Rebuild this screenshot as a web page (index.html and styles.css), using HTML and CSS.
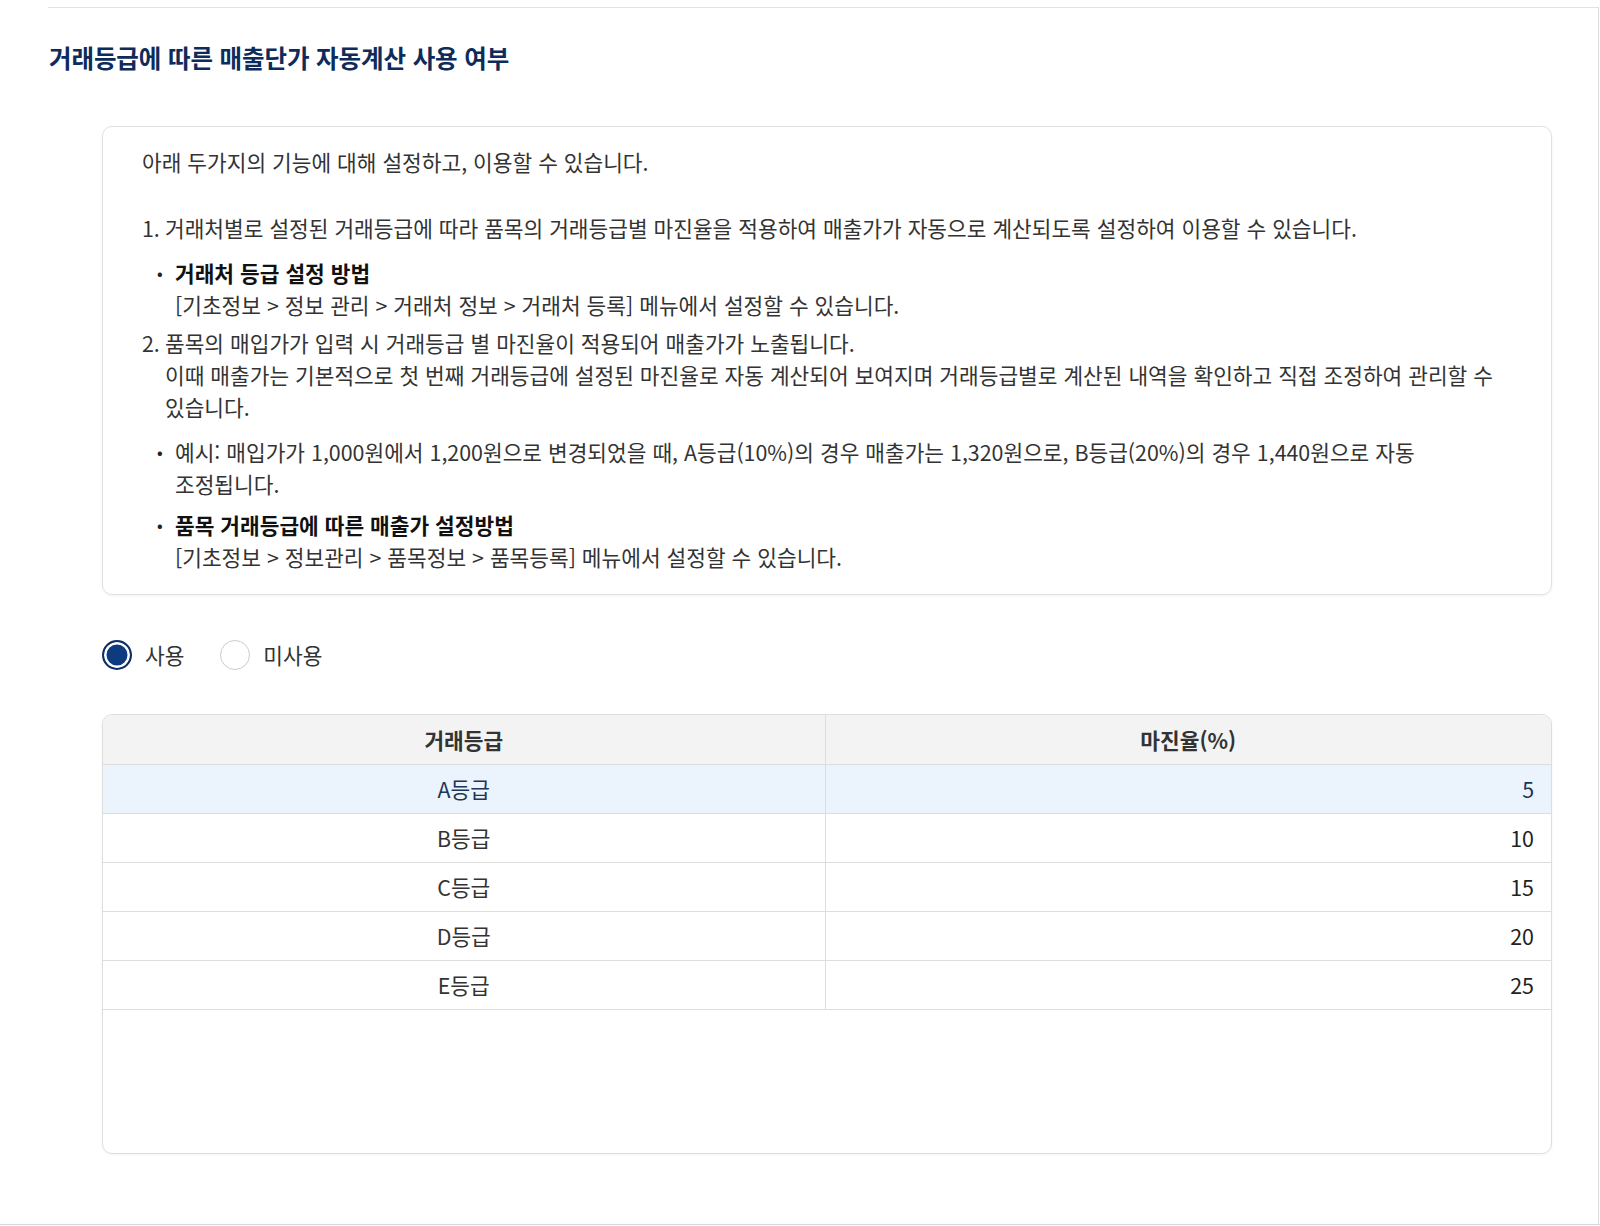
FILE: index.html
```html
<!DOCTYPE html>
<html lang="ko">
<head>
<meta charset="utf-8">
<title>거래등급에 따른 매출단가 자동계산 사용 여부</title>
<link rel="stylesheet" href="styles.css">
</head>
<body>
<div class="page">
<div class="frame">
  <h2 class="title">거래등급에 따른 매출단가 자동계산 사용 여부</h2>

  <div class="card">
    <p class="intro">아래 두가지의 기능에 대해 설정하고, 이용할 수 있습니다.</p>

    <div class="num-item">
      <span class="num">1.</span>
      <span class="num-text">거래처별로 설정된 거래등급에 따라 품목의 거래등급별 마진율을 적용하여 매출가가 자동으로 계산되도록 설정하여 이용할 수 있습니다.</span>
    </div>
    <div class="bullet b1">
      <span class="dot">•</span>
      <div class="bullet-text"><strong>거래처 등급 설정 방법</strong><br>[기초정보 &gt; 정보 관리 &gt; 거래처 정보 &gt; 거래처 등록] 메뉴에서 설정할 수 있습니다.</div>
    </div>

    <div class="num-item n2">
      <span class="num">2.</span>
      <span class="num-text">품목의 매입가가 입력 시 거래등급 별 마진율이 적용되어 매출가가 노출됩니다.<br>이때 매출가는 기본적으로 첫 번째 거래등급에 설정된 마진율로 자동 계산되어 보여지며 거래등급별로 계산된 내역을 확인하고 직접 조정하여 관리할 수 있습니다.</span>
    </div>
    <div class="bullet b2">
      <span class="dot">•</span>
      <div class="bullet-text">예시: 매입가가 1,000원에서 1,200원으로 변경되었을 때, A등급(10%)의 경우 매출가는 1,320원으로, B등급(20%)의 경우 1,440원으로 자동 조정됩니다.</div>
    </div>
    <div class="bullet b3">
      <span class="dot">•</span>
      <div class="bullet-text"><strong>품목 거래등급에 따른 매출가 설정방법</strong><br>[기초정보 &gt; 정보관리 &gt; 품목정보 &gt; 품목등록] 메뉴에서 설정할 수 있습니다.</div>
    </div>
  </div>

  <div class="radios">
    <label class="radio checked"><span class="circle"></span><span class="rlabel">사용</span></label>
    <label class="radio"><span class="circle"></span><span class="rlabel">미사용</span></label>
  </div>

  <div class="grid-wrap">
    <table class="grid">
      <colgroup><col class="c1"><col class="c2"></colgroup>
      <thead>
        <tr><th>거래등급</th><th>마진율(%)</th></tr>
      </thead>
      <tbody>
        <tr class="sel"><td class="grade">A등급</td><td class="rate">5</td></tr>
        <tr><td class="grade">B등급</td><td class="rate">10</td></tr>
        <tr><td class="grade">C등급</td><td class="rate">15</td></tr>
        <tr><td class="grade">D등급</td><td class="rate">20</td></tr>
        <tr><td class="grade">E등급</td><td class="rate">25</td></tr>
      </tbody>
    </table>
  </div>
</div>
</div>
</body>
</html>
```

FILE: styles.css
```css
* { box-sizing: border-box; }
html, body {
  margin: 0;
  padding: 0;
  background: #ffffff;
}
body {
  font-family: "Noto Sans CJK KR", "Noto Sans", "Liberation Sans", sans-serif;
  color: #333333;
  width: 1600px;
  height: 1226px;
  overflow: hidden;
}
.page {
  width: 1600px;
  height: 1225px;
  border-bottom: 1px solid #d8d8d8;
  padding-top: 7px;
}
.frame {
  margin-left: 48px;
  width: 1551px;
  height: 1218px;
  border-top: 1px solid #e2e2e2;
  border-right: 1px solid #dcdcdc;
  padding: 34px 46px 0 54px;
}
.title {
  margin: 0 0 0 -53px;
  font-size: 24.5px;
  line-height: 32px;
  font-weight: 700;
  color: #0d2b5b;
  letter-spacing: -0.1px;
}
.card {
  margin-top: 52px;
  width: 1450px;
  height: 469px;
  border: 1px solid #e1e1e1;
  border-radius: 10px;
  box-shadow: 0 1px 3px rgba(0, 0, 0, 0.06);
  padding: 19px 39px;
  font-size: 21.4px;
  line-height: 32px;
  color: #333333;
  word-break: keep-all;
}
.intro { margin: 0 0 34px 0; }
.num-item { display: flex; }
.num-item.n2 { margin-top: 6px; }
.num { width: 23px; flex: none; }
.num-text { flex: 1; }
.bullet { display: flex; padding-left: 15px; }
.bullet.b1 { margin-top: 13px; }
.bullet.b2 { margin-top: 13px; }
.bullet.b3 { margin-top: 9px; }
.dot { width: 18px; flex: none; font-size: 15px; color: #222222; font-weight: 700; }
.bullet-text { flex: 1; }
.bullet-text strong { font-weight: 700; color: #111111; }

.radios {
  display: flex;
  align-items: center;
  gap: 36px;
  margin-top: 44px;
  height: 32px;
}
.radio {
  display: flex;
  align-items: center;
  gap: 13px;
  font-size: 21.4px;
  color: #333333;
}
.circle {
  width: 30px;
  height: 30px;
  border-radius: 50%;
  border: 1.5px solid #cccccc;
  background: #ffffff;
  flex: none;
}
.radio.checked .circle {
  border: 2.5px solid #0c2f66;
  box-shadow: inset 0 0 0 2.5px #ffffff;
  background: #0e3a80;
}
.rlabel { line-height: 32px; }

.grid-wrap {
  margin-top: 43px;
  width: 1450px;
  height: 440px;
  border: 1px solid #dedede;
  border-radius: 10px;
  overflow: hidden;
  box-shadow: 0 1px 3px rgba(0, 0, 0, 0.05);
}
.grid {
  width: 100%;
  border-collapse: collapse;
  font-size: 21.4px;
}
.grid col.c1 { width: 722px; }
.grid th, .grid td {
  height: 49px;
  padding: 0 17px;
  border-bottom: 1px solid #dddddd;
}
.grid th + th, .grid td + td { border-left: 1px solid #dddddd; }
.grid th {
  background: #f3f3f3;
  font-weight: 700;
  color: #333333;
  text-align: center;
}
.grid td.grade { text-align: center; color: #333333; }
.grid td.rate { text-align: right; color: #222222; }
.grid tr.sel td { background: #ebf4fd; color: #1c3558; }
```
